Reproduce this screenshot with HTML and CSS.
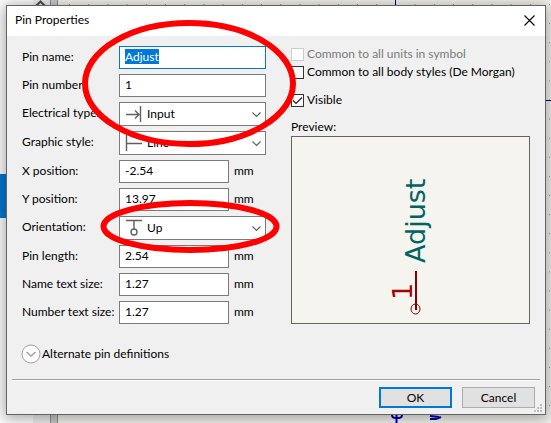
FILE: index.html
```html
<!DOCTYPE html>
<html lang="en">
<head>
<meta charset="utf-8">
<title>Pin Properties</title>
<link rel="stylesheet" href="styles.css">
</head>
<body>
<div class="desktop" aria-hidden="true">
  <div class="tree"><span class="tree-selected"></span></div>
  <div class="scrollbar"><svg width="17" height="8" viewBox="0 0 17 8"><path d="M3 6 7.500 1.500 12 6" fill="none" stroke="#505050" stroke-width="2"/></svg></div>
  <div class="sash"></div>
  <div class="canvas">
    <svg width="100%" height="100%">
      <defs><pattern id="dots" x="11" y="4" width="19.200" height="19.100" patternUnits="userSpaceOnUse"><rect width="1" height="1" fill="#8c8c8c"/></pattern></defs>
      <rect width="100%" height="100%" fill="url(#dots)"/>
      <path d="M337.500 0V6M480 100.500H500" stroke="#000084" fill="none"/>
      <g stroke="#0000a8" stroke-width="2" fill="none"><path d="M334 413v2q0 3 4 3h2q4 0 4-3v-2M338.500 412v11M372 419h6l5-2M372 416l9 1"/></g>
    </svg>
  </div>
</div>

<form class="dialog">
  <header class="titlebar">
    <h1>Pin Properties</h1>
    <button type="button" class="close" aria-label="Close"><svg width="11" height="11" viewBox="0 0 11 11"><path d="M.5.5l10 10M10.500.5l-10 10" stroke="#000" stroke-width="1.100"/></svg></button>
  </header>
  <div class="content">
    <div class="fields">
      <label for="name">Pin name:</label>
      <input id="name" class="wide" type="text" value="Adjust" autofocus>
      <label for="number">Pin number:</label>
      <input id="number" class="wide" type="text" value="1">
      <label for="etype">Electrical type:</label>
      <div class="choice">
        <svg class="icon" width="18" height="18" viewBox="0 0 18 18"><path d="M1 9.500h13M10 5.500l4 4-4 4M15.500 1v16" /></svg>
        <select id="etype"><option>Input</option></select>
        <svg class="chevron" width="9" height="6" viewBox="0 0 9 6"><path d="M.5.5l4 4 4-4"/></svg>
      </div>
      <label for="style">Graphic style:</label>
      <div class="choice">
        <svg class="icon" width="18" height="18" viewBox="0 0 18 18"><path d="M1.500 1v16M2 9.500h15"/></svg>
        <select id="style"><option>Line</option></select>
        <svg class="chevron" width="9" height="6" viewBox="0 0 9 6"><path d="M.5.5l4 4 4-4"/></svg>
      </div>
      <label for="xpos">X position:</label>
      <div class="measure"><input id="xpos" type="text" value="-2.54"><span>mm</span></div>
      <label for="ypos">Y position:</label>
      <div class="measure"><input id="ypos" type="text" value="13.97"><span>mm</span></div>
      <label for="orient">Orientation:</label>
      <div class="choice">
        <svg class="icon" width="18" height="18" viewBox="0 0 18 18"><path d="M1 1.500h16M9 2v8"/><circle cx="9" cy="13" r="3"/></svg>
        <select id="orient"><option>Up</option></select>
        <svg class="chevron" width="9" height="6" viewBox="0 0 9 6"><path d="M.5.5l4 4 4-4"/></svg>
      </div>
      <label for="length">Pin length:</label>
      <div class="measure"><input id="length" type="text" value="2.54"><span>mm</span></div>
      <label for="nsize">Name text size:</label>
      <div class="measure"><input id="nsize" type="text" value="1.27"><span>mm</span></div>
      <label for="numsize">Number text size:</label>
      <div class="measure"><input id="numsize" type="text" value="1.27"><span>mm</span></div>
    </div>
    <div class="side">
      <label class="check disabled"><input type="checkbox" disabled>Common to all units in symbol</label>
      <label class="check"><input type="checkbox">Common to all body styles (De Morgan)</label>
      <label class="check visible"><input type="checkbox" checked>Visible</label>
      <p class="caption">Preview:</p>
      <div class="preview">
        <svg width="237" height="186" viewBox="0 0 237 186">
          <text class="pin-name" transform="translate(133 126) rotate(-90)">Adjust</text>
          <text class="pin-number" transform="translate(120 163) rotate(-90)">1</text>
          <path d="M124 134v39" stroke="#840000" stroke-width="2"/>
          <ellipse cx="123.500" cy="172" rx="4.500" ry="5" fill="none" stroke="#840000"/>
        </svg>
      </div>
    </div>
  </div>
  <button type="button" class="expander"><svg width="20" height="20" viewBox="0 0 20 20"><circle cx="10" cy="10" r="9" fill="#fff" stroke="#a0a0a0"/><path d="M5.500 8l4.500 4 4.500-4" fill="none" stroke="#a0a0a0" stroke-width="1.500"/></svg>Alternate pin definitions</button>
  <footer class="actions">
    <button type="submit" class="button primary">OK</button>
    <button type="button" class="button">Cancel</button>
    <svg class="grip" width="8" height="8" viewBox="0 0 8 8"><path d="M6 0h2v2H6zM3 3h2v2H3zM6 3h2v2H6zM0 6h2v2H0zM3 6h2v2H3zM6 6h2v2H6z" fill="#bfbfbf"/></svg>
  </footer>
</form>

<svg class="markup" width="551" height="423" viewBox="0 0 551 423" aria-hidden="true">
  <ellipse cx="189" cy="83.500" rx="104" ry="60.500" stroke-width="6"/>
  <ellipse cx="190" cy="226.500" rx="86.500" ry="23.500" stroke-width="6"/>
</svg>
<script>document.getElementById("name").select();</script>
</body>
</html>
```
FILE: styles.css
```css
* { box-sizing: border-box; }
body {
  margin: 0;
  padding: 5px 5px 8px 6px;
  min-height: 100vh;
  position: relative;
  overflow: hidden;
  font: 12px/16px Lato, "Open Sans", sans-serif;
  color: #000;
}
input, select, button { font: inherit; color: inherit; margin: 0; }

.desktop { position: absolute; inset: 0; display: flex; z-index: -1; }
.tree { width: 33px; background: #fff; padding-top: 174px; }
.tree-selected { display: block; height: 44px; background: #0078d7; }
.scrollbar { width: 17px; background: #f0f0f0; }
.scrollbar svg { display: block; }
.sash { width: 8px; background: #ccc; border: solid #909090; border-width: 0 1px; }
.canvas { flex: 1; background: #f5f4ef; }
.canvas svg { display: block; }

.dialog {
  background: #f0f0f0;
  border: 1px solid #646464;
  box-shadow: 0 2px 14px 2px rgba(0, 0, 0, .35);
}
.titlebar {
  display: flex;
  align-items: center;
  justify-content: space-between;
  height: 30px;
  padding: 0 10px 2px 8px;
  background: #fff;
}
.titlebar h1 { margin: 0; font-size: 12px; font-weight: 400; }
.close { display: flex; padding: 0; border: 0; background: none; }

.content { display: flex; gap: 25px; padding: 10px 15px 0; }
.fields {
  display: grid;
  grid-template-columns: 97px 147px;
  row-gap: 5px;
  align-items: center;
}
.fields label, .measure span { padding-bottom: 2px; white-space: nowrap; }
.fields input {
  display: block;
  width: 110px;
  height: 23px;
  padding: 0 5px 2px;
  border: 1px solid #7a7a7a;
  background: #fff;
  outline: 0;
}
.fields input.wide { width: 100%; }
.fields input:focus { border-color: #0078d7; }
.fields input::selection { background: #0078d7; color: #fff; }
.measure { display: flex; align-items: center; gap: 5px; }
.choice { position: relative; }
.choice select {
  display: block;
  appearance: none;
  width: 100%;
  height: 24px;
  padding: 0 24px 1px 27px;
  border: 1px solid #7a7a7a;
  border-radius: 0;
  background: #fff;
}
.choice svg { position: absolute; pointer-events: none; fill: none; stroke: #606060; }
.choice .icon { left: 6px; top: 3px; stroke-width: 1.4; }
.choice .chevron { right: 5px; top: 10px; stroke-width: 1.2; }

.side { flex: 1; display: flex; flex-direction: column; margin-top: -1px; }
.check { display: flex; align-items: center; gap: 3px; height: 18px; white-space: nowrap; }
.check input {
  appearance: none;
  flex: none;
  width: 13px;
  height: 13px;
  border: 1px solid #333;
  background: #fff;
}
.check input:checked {
  background: #fff url("data:image/svg+xml,%3Csvg xmlns='http://www.w3.org/2000/svg' viewBox='0 0 11 11'%3E%3Cpath d='M1 5.500l3 3L10 2.500' fill='none' stroke='%23222' stroke-width='1.200'/%3E%3C/svg%3E");
}
.check.disabled { color: #7a7a7a; }
.check.disabled input { border-color: #ccc; }
.check.visible { margin-top: 10px; }
.caption { margin: 10px 0 1px; }
.preview {
  flex: 1;
  display: flex;
  justify-content: center;
  align-items: center;
  border: 1px solid #646464;
  background: #f5f4ef;
}
.preview text { font-family: "DejaVu Sans", sans-serif; font-size: 27px; }
.pin-name { fill: #006464; }
.pin-number { fill: #a90000; }

.expander {
  display: flex;
  align-items: center;
  margin: 20px 0 15px 14px;
  padding: 0;
  gap: 1px;
  border: 0;
  background: none;
}
.actions {
  position: relative;
  display: flex;
  justify-content: flex-end;
  gap: 10px;
  margin: 0 5px;
  padding: 7px 5px 6px;
  border-top: 1px solid #a0a0a0;
  box-shadow: inset 0 1px #fff;
}
.button {
  width: 73px;
  height: 21px;
  padding: 0;
  line-height: 17px;
  border: 1px solid #adadad;
  background: #e1e1e1;
}
.button.primary { border: 2px solid #0078d7; }
.grip { position: absolute; right: -2px; bottom: 2px; }

.markup { position: absolute; left: 0; top: 0; fill: none; stroke: #f00; pointer-events: none; }
```
